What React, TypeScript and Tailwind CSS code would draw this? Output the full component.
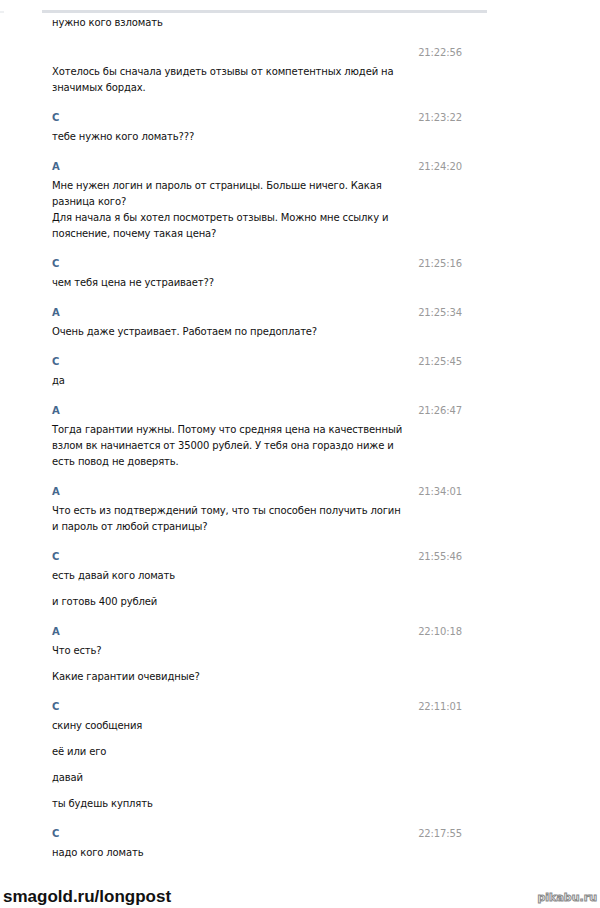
import React from "react";

type Msg = { name?: string; time?: string; paras: string[][] };

const msgs: Msg[] = [
  { time: "21:22:56", paras: [["Хотелось бы сначала увидеть отзывы от компетентных людей на", "значимых бордах."]] },
  { name: "С", time: "21:23:22", paras: [["тебе нужно кого ломать???"]] },
  {
    name: "А",
    time: "21:24:20",
    paras: [["Мне нужен логин и пароль от страницы. Больше ничего. Какая", "разница кого?", "Для начала я бы хотел посмотреть отзывы. Можно мне ссылку и", "пояснение, почему такая цена?"]],
  },
  { name: "С", time: "21:25:16", paras: [["чем тебя цена не устраивает??"]] },
  { name: "А", time: "21:25:34", paras: [["Очень даже устраивает. Работаем по предоплате?"]] },
  { name: "С", time: "21:25:45", paras: [["да"]] },
  {
    name: "А",
    time: "21:26:47",
    paras: [["Тогда гарантии нужны. Потому что средняя цена на качественный", "взлом вк начинается от 35000 рублей. У тебя она гораздо ниже и", "есть повод не доверять."]],
  },
  { name: "А", time: "21:34:01", paras: [["Что есть из подтверждений тому, что ты способен получить логин", "и пароль от любой страницы?"]] },
  { name: "С", time: "21:55:46", paras: [["есть давай кого ломать"], ["и готовь 400 рублей"]] },
  { name: "А", time: "22:10:18", paras: [["Что есть?"], ["Какие гарантии очевидные?"]] },
  { name: "С", time: "22:11:01", paras: [["скину сообщения"], ["её или его"], ["давай"], ["ты будешь куплять"]] },
  { name: "С", time: "22:17:55", paras: [["надо кого ломать"]] },
];

export default function App() {
  return (
    <div className="w-[600px] h-[908px] bg-white overflow-hidden relative" style={{ fontFamily: '"DejaVu Sans", Tahoma, sans-serif' }}>
      <div className="flex items-start pt-[10px]">
        <div className="w-[4px] h-[2px] mt-[1px] bg-[#eef0f2]" />
        <div className="ml-[38px] w-[445px] h-[3px] bg-[#dcdfe4]" />
      </div>
      <div className="pl-[52px] w-[462px] text-[10px] leading-[16px] tracking-[-0.13px] text-[#111]">
        <div className="mt-[2px]">нужно кого взломать</div>
        {msgs.map((m, i) => (
          <div key={i} className="mt-[14px]">
            <div className="flex justify-between h-[16px] mb-[3px]">
              <span className="font-bold text-[#45688e]">{m.name ?? ""}</span>
              <span className="text-[#999]">{m.time}</span>
            </div>
            {m.paras.map((p, j) => (
              <div key={j} className={j > 0 ? "mt-[10px]" : ""}>
                {p.map((l, k) => (
                  <div key={k}>{l}</div>
                ))}
              </div>
            ))}
          </div>
        ))}
      </div>
      <div className="absolute left-[3px] bottom-[1px] text-[17px] font-bold text-[#111] leading-[20px]" style={{ fontFamily: '"Liberation Sans", Arial, sans-serif' }}>smagold.ru/longpost</div>
      <div className="absolute right-[3px] bottom-[4px] text-[11px] font-bold text-white leading-[12px] [-webkit-text-stroke:1px_#8a8a8a]">pikabu.ru</div>
    </div>
  );
}
